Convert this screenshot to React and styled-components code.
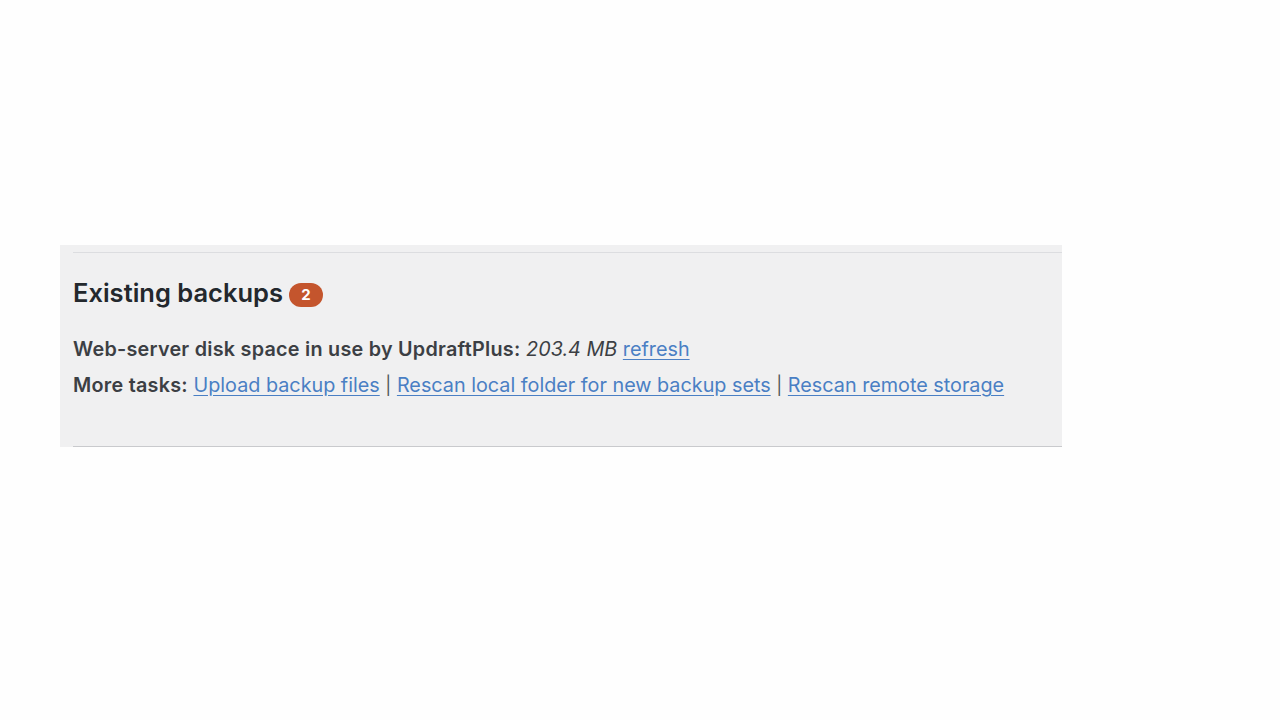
import styled, { createGlobalStyle } from "styled-components";

const GlobalStyle = createGlobalStyle`
  html, body {
    margin: 0;
    padding: 0;
    background: #fefefe;
  }
  body {
    font-family: Inter, "Liberation Sans", sans-serif;
    -webkit-font-smoothing: antialiased;
  }
`;

const Page = styled.div`
  padding-top: 245px;
  padding-left: 60px;
`;

const Panel = styled.section`
  width: 1002px;
  height: 202px;
  box-sizing: border-box;
  background: #f0f0f1;
  padding-top: 7px;
  display: flex;
  flex-direction: column;
`;

const TopRule = styled.div`
  margin-left: 13px;
  border-top: 1px solid #dcdde0;
`;

const Body = styled.div`
  flex: 1;
  margin-left: 13px;
  padding-top: 24px;
  border-bottom: 1px solid #c9cacd;
`;

const Heading = styled.h2`
  margin: 0 0 27px;
  display: flex;
  align-items: center;
  gap: 6px;
  font-size: 25.5px;
  line-height: 32px;
  font-weight: 600;
  color: #23282d;
  letter-spacing: 0;
`;

const Count = styled.span`
  display: inline-flex;
  align-items: center;
  justify-content: center;
  min-width: 34px;
  height: 24px;
  margin-top: 4px;
  border-radius: 12px;
  background: #c4552d;
  color: #fff;
  font-size: 15px;
  font-weight: 700;
`;

const Line = styled.p`
  margin: 0 0 10px;
  font-size: 19.8px;
  line-height: 26px;
  color: #3c3f44;
  font-weight: 400;
`;

const Label = styled.strong`
  font-weight: 600;
  letter-spacing: 0.25px;
`;

const Size = styled.em`
  font-style: italic;
`;

const Link = styled.a`
  color: #4a7fc4;
  text-decoration: underline;
  text-underline-offset: 3px;
  cursor: pointer;
`;

const Sep = styled.span`
  color: #50555b;
  font-size: 18px;
`;

export default function App() {
  return (
    <>
      <GlobalStyle />
      <Page>
        <Panel>
          <TopRule />
          <Body>
            <Heading>
              Existing backups <Count>2</Count>
            </Heading>
            <Line>
              <Label>Web-server disk space in use by UpdraftPlus:</Label>{" "}
              <Size>203.4 MB</Size> <Link>refresh</Link>
            </Line>
            <Line>
              <Label>More tasks:</Label> <Link>Upload backup files</Link>{" "}
              <Sep>|</Sep> <Link>Rescan local folder for new backup sets</Link>{" "}
              <Sep>|</Sep> <Link>Rescan remote storage</Link>
            </Line>
          </Body>
        </Panel>
      </Page>
    </>
  );
}
